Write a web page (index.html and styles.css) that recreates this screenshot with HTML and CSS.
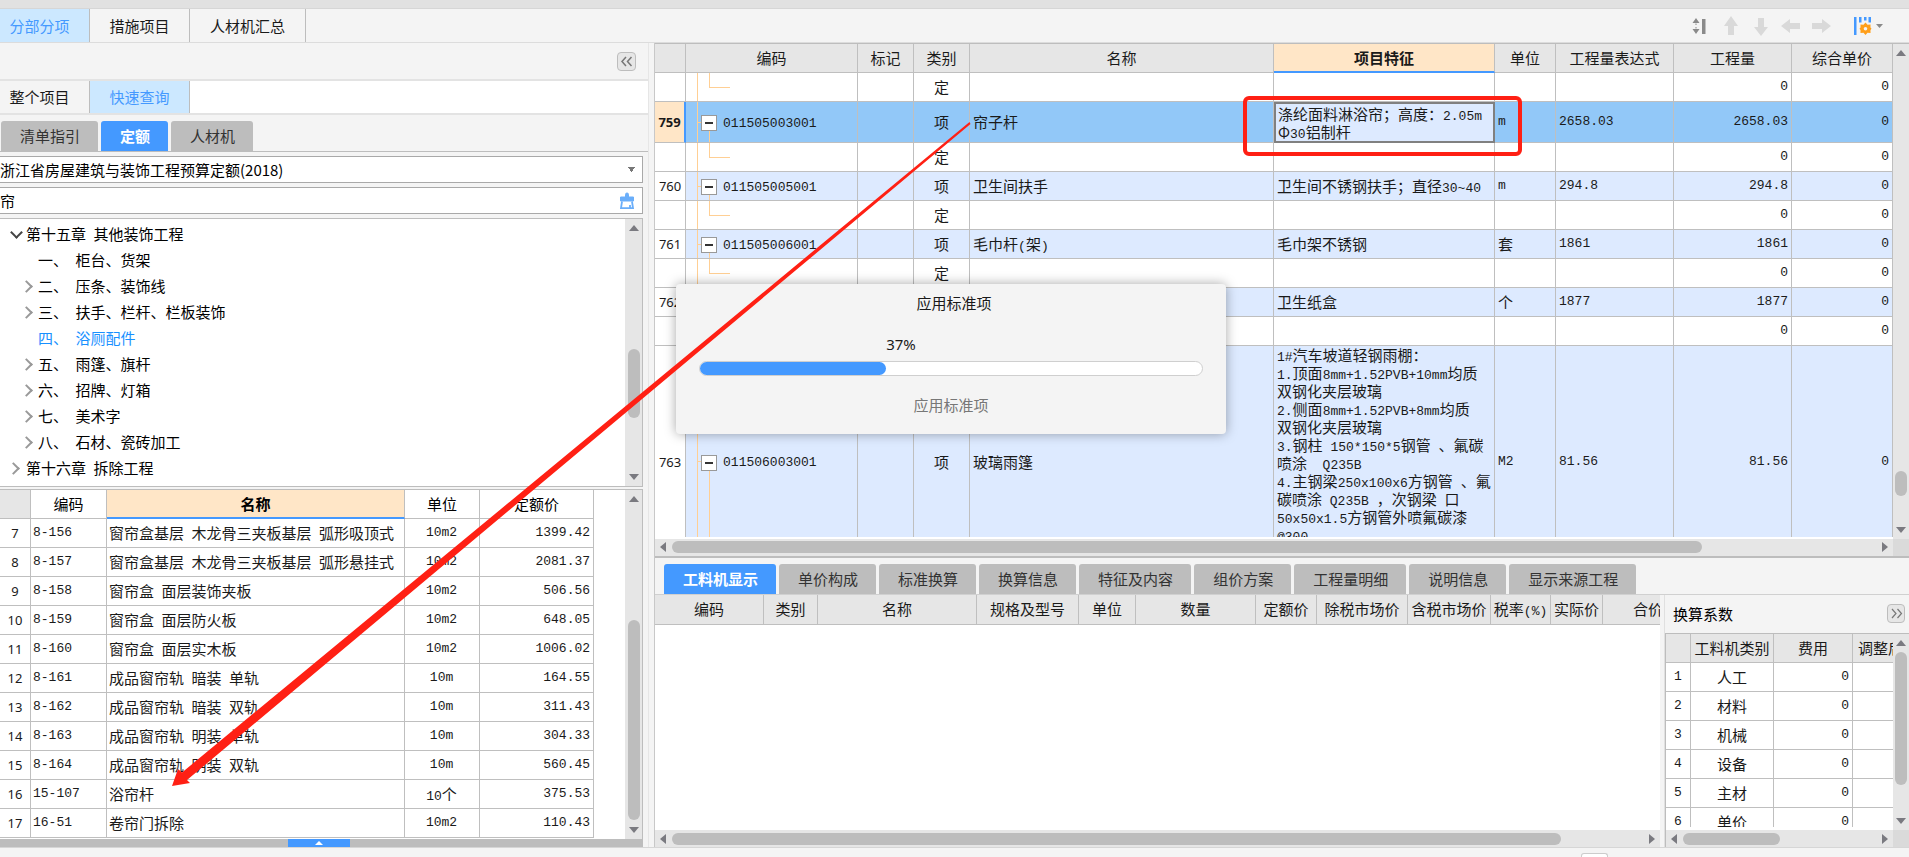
FILE: index.html
```html
<!DOCTYPE html>
<html lang="zh-CN">
<head>
<meta charset="utf-8">
<title>分部分项</title>
<link rel="stylesheet" href="styles.css">
</head>
<body>
<div class="strip"></div>
<header class="topbar">
  <nav class="tabs">
    <button class="tab active">分部分项</button>
    <button class="tab">措施项目</button>
    <button class="tab tab-wide">人材机汇总</button>
  </nav>
  <div class="tools">
    <button class="tool sort" aria-label="排序"><svg width="14" height="18" viewBox="0 0 14 18"><path d="M4 1l3.500 5h-7zM4 17l3.500-5h-7z" fill="#8a8a8a"/><path d="M4 6.500v1.500M4 10v1.500" stroke="#8a8a8a"/><path d="M10 2h3.500v15H10z" fill="#8a8a8a"/></svg></button>
    <button class="tool" aria-label="上移"><svg width="20" height="20" viewBox="0 0 20 20"><path d="M10 0l7 10h-4v9H7v-9H3z" fill="#d9d9d9"/></svg></button>
    <button class="tool" aria-label="下移"><svg width="20" height="20" viewBox="0 0 20 20"><path d="M10 20l7-9h-4V2H7v9H3z" fill="#d9d9d9"/></svg></button>
    <button class="tool" aria-label="左移"><svg width="20" height="20" viewBox="0 0 20 20"><path d="M0 10l9-7v4h10v6H9v4z" fill="#d9d9d9"/></svg></button>
    <button class="tool" aria-label="右移"><svg width="20" height="20" viewBox="0 0 20 20"><path d="M20 10l-9-7v4H1v6h10v4z" fill="#d9d9d9"/></svg></button>
    <button class="tool columns" aria-label="列设置"><svg width="32" height="20" viewBox="0 0 32 20"><path d="M1 1h2.500v18H1z" fill="#4499ff"/><path d="M6 1h2.500v5.500H6zM11 1h2.500v3.500H11zM15.500 1H18v5.500h-2.500z" fill="#4499ff"/><path d="M12.500 6.500l2 2.300 3-.3v3l1 1.300-1 1.300v3l-3-.3-2 2.300-2-2.300-3 .3v-3l-1-1.300 1-1.300v-3l3 .3z" fill="#ff9f1a"/><circle cx="12.500" cy="12.800" r="1.800" fill="#f4f4f4"/><path d="M23 8h7l-3.500 4z" fill="#8a8a8a"/></svg></button>
  </div>
</header>
<main class="work">
  <section class="left">
    <div class="fold-row"><button class="fold" aria-label="收起"><svg width="13" height="11" viewBox="0 0 13 11"><path d="M6 1L2 5.500 6 10M11.500 1l-4 4.500 4 4.500" fill="none" stroke="#777" stroke-width="1.500"/></svg></button></div>
    <nav class="tabs subtabs">
      <button class="tab">整个项目</button>
      <button class="tab active">快速查询</button>
    </nav>
    <nav class="chips left-chips">
      <button class="chip">清单指引</button>
      <button class="chip on">定额</button>
      <button class="chip">人材机</button>
    </nav>
    <div class="query">
      <select class="field pick" aria-label="定额库"><option>浙江省房屋建筑与装饰工程预算定额(2018)</option></select>
      <div class="field search">
        <input type="text" value="帘" aria-label="关键字">
        <button class="clear" aria-label="清空"><svg width="16" height="18" viewBox="0 0 16 18"><path d="M6.500 5V2.500a1.500 1.500 0 013 0V5h5v4h-13V5z" fill="#6aaefa" stroke="#6aaefa"/><path d="M3 9.500L2 16.200h12L13 9.500M11 16v-3" fill="none" stroke="#6aaefa" stroke-width="1.800"/></svg></button>
      </div>
      <div class="tree-box">
        <ul class="tree">
          <li class="open">第十五章&ensp;其他装饰工程</li>
          <li class="sub">一、&ensp;柜台、货架</li>
          <li class="sub more">二、&ensp;压条、装饰线</li>
          <li class="sub more">三、&ensp;扶手、栏杆、栏板装饰</li>
          <li class="sub picked">四、&ensp;浴厕配件</li>
          <li class="sub more">五、&ensp;雨篷、旗杆</li>
          <li class="sub more">六、&ensp;招牌、灯箱</li>
          <li class="sub more">七、&ensp;美术字</li>
          <li class="sub more">八、&ensp;石材、瓷砖加工</li>
          <li class="more">第十六章&ensp;拆除工程</li>
        </ul>
        <div class="vbar"><b class="up"></b><div class="track t-tree"><i></i></div><b class="down"></b></div>
      </div>
      <div class="quota-box">
        <div class="quota-scroll">
        <table class="grid quota">
          <colgroup><col class="q1"><col class="q2"><col><col class="q4"><col class="q5"></colgroup>
          <thead><tr><th class="gray"></th><th>编码</th><th class="sel">名称</th><th>单位</th><th>定额价</th></tr></thead>
          <tbody>
          <tr><td class="no">7</td><td class="n">8-156</td><td>窗帘盒基层&ensp;木龙骨三夹板基层&ensp;弧形吸顶式</td><td class="n c">10m2</td><td class="n r">1399.42</td></tr>
          <tr><td class="no">8</td><td class="n">8-157</td><td>窗帘盒基层&ensp;木龙骨三夹板基层&ensp;弧形悬挂式</td><td class="n c">10m2</td><td class="n r">2081.37</td></tr>
          <tr><td class="no">9</td><td class="n">8-158</td><td>窗帘盒&ensp;面层装饰夹板</td><td class="n c">10m2</td><td class="n r">506.56</td></tr>
          <tr><td class="no">10</td><td class="n">8-159</td><td>窗帘盒&ensp;面层防火板</td><td class="n c">10m2</td><td class="n r">648.05</td></tr>
          <tr><td class="no">11</td><td class="n">8-160</td><td>窗帘盒&ensp;面层实木板</td><td class="n c">10m2</td><td class="n r">1006.02</td></tr>
          <tr><td class="no">12</td><td class="n">8-161</td><td>成品窗帘轨&ensp;暗装&ensp;单轨</td><td class="n c">10m</td><td class="n r">164.55</td></tr>
          <tr><td class="no">13</td><td class="n">8-162</td><td>成品窗帘轨&ensp;暗装&ensp;双轨</td><td class="n c">10m</td><td class="n r">311.43</td></tr>
          <tr><td class="no">14</td><td class="n">8-163</td><td>成品窗帘轨&ensp;明装&ensp;单轨</td><td class="n c">10m</td><td class="n r">304.33</td></tr>
          <tr><td class="no">15</td><td class="n">8-164</td><td>成品窗帘轨&ensp;明装&ensp;双轨</td><td class="n c">10m</td><td class="n r">560.45</td></tr>
          <tr><td class="no">16</td><td class="n">15-107</td><td>浴帘杆</td><td class="c"><span class="n">10</span>个</td><td class="n r">375.53</td></tr>
          <tr><td class="no">17</td><td class="n">16-51</td><td>卷帘门拆除</td><td class="n c">10m2</td><td class="n r">110.43</td></tr>
          </tbody>
        </table>
        </div>
        <div class="vbar"><b class="up"></b><div class="track t-quota"><i></i></div><b class="down"></b></div>
      </div>
      <div class="drawer"><button class="drawer-tab" aria-label="展开"><b class="up"></b></button></div>
    </div>
  </section>
  <section class="right">
    <div class="pane bill">
      <div class="bill-scroll">
      <table class="grid items">
        <colgroup><col class="w32"><col class="w172"><col class="w56"><col class="w56"><col><col class="w221"><col class="w61"><col class="w118"><col class="w118"><col class="w101"></colgroup>
        <thead><tr><th></th><th>编码</th><th>标记</th><th>类别</th><th>名称</th><th class="sel">项目特征</th><th>单位</th><th>工程量表达式</th><th>工程量</th><th>综合单价</th></tr></thead>
        <tbody>
        <tr><td class="no"></td><td class="leaf"></td><td></td><td class="c">定</td><td></td><td></td><td></td><td></td><td class="n r">0</td><td class="n r">0</td></tr>
        <tr class="item current"><td class="no">759</td><td class="node"><button class="fold-node" aria-label="折叠"></button><span class="n">011505003001</span></td><td></td><td class="c">项</td><td>帘子杆</td><td class="feature focus">涤纶面料淋浴帘；高度：<span class="n">2.05m</span><br>Φ<span class="n">30</span>铝制杆</td><td class="n">m</td><td class="n">2658.03</td><td class="n r">2658.03</td><td class="n r">0</td></tr>
        <tr><td class="no"></td><td class="leaf"></td><td></td><td class="c">定</td><td></td><td></td><td></td><td></td><td class="n r">0</td><td class="n r">0</td></tr>
        <tr class="item"><td class="no">760</td><td class="node"><button class="fold-node" aria-label="折叠"></button><span class="n">011505005001</span></td><td></td><td class="c">项</td><td>卫生间扶手</td><td>卫生间不锈钢扶手；直径<span class="n">30~40</span></td><td class="n">m</td><td class="n">294.8</td><td class="n r">294.8</td><td class="n r">0</td></tr>
        <tr><td class="no"></td><td class="leaf"></td><td></td><td class="c">定</td><td></td><td></td><td></td><td></td><td class="n r">0</td><td class="n r">0</td></tr>
        <tr class="item"><td class="no">761</td><td class="node"><button class="fold-node" aria-label="折叠"></button><span class="n">011505006001</span></td><td></td><td class="c">项</td><td>毛巾杆<span class="n">(</span>架<span class="n">)</span></td><td>毛巾架不锈钢</td><td>套</td><td class="n">1861</td><td class="n r">1861</td><td class="n r">0</td></tr>
        <tr><td class="no"></td><td class="leaf"></td><td></td><td class="c">定</td><td></td><td></td><td></td><td></td><td class="n r">0</td><td class="n r">0</td></tr>
        <tr class="item"><td class="no">762</td><td class="node"></td><td></td><td class="c"></td><td></td><td>卫生纸盒</td><td>个</td><td class="n">1877</td><td class="n r">1877</td><td class="n r">0</td></tr>
        <tr><td class="no"></td><td class="leaf"></td><td></td><td class="c"></td><td></td><td></td><td></td><td></td><td class="n r">0</td><td class="n r">0</td></tr>
        <tr class="item tall"><td class="no">763</td><td class="node"><button class="fold-node" aria-label="折叠"></button><span class="n">011506003001</span></td><td></td><td class="c">项</td><td>玻璃雨篷</td><td class="feature"><span class="n">1#</span>汽车坡道轻钢雨棚：<br><span class="n">1.</span>顶面<span class="n">8mm+1.52PVB+10mm</span>均质<br>双钢化夹层玻璃<br><span class="n">2.</span>侧面<span class="n">8mm+1.52PVB+8mm</span>均质<br>双钢化夹层玻璃<br><span class="n">3.</span>钢柱<span class="n"> 150*150*5</span>钢管<span class="n"> </span>、氟碳<br>喷涂<span class="n">&nbsp; Q235B</span><br><span class="n">4.</span>主钢梁<span class="n">250x100x6</span>方钢管<span class="n"> </span>、氟<br>碳喷涂<span class="n"> Q235B </span>，次钢梁<span class="n"> </span>口<br><span class="n">50x50x1.5</span>方钢管外喷氟碳漆<br><span class="n">@300</span></td><td class="n">M2</td><td class="n">81.56</td><td class="n r">81.56</td><td class="n r">0</td></tr>
        </tbody>
      </table>
      </div>
      <div class="vbar"><b class="up"></b><div class="track t-bill"><i></i></div><b class="down"></b></div>
      <div class="hbar"><b class="prev"></b><div class="track t-bill-h"><i></i></div><b class="next"></b></div>
      <div class="corner"></div>
    </div>
    <nav class="chips lower-chips">
      <button class="chip on">工料机显示</button>
      <button class="chip">单价构成</button>
      <button class="chip">标准换算</button>
      <button class="chip">换算信息</button>
      <button class="chip">特征及内容</button>
      <button class="chip">组价方案</button>
      <button class="chip">工程量明细</button>
      <button class="chip">说明信息</button>
      <button class="chip">显示来源工程</button>
    </nav>
    <div class="lower">
      <div class="detail">
        <div class="detail-scroll">
          <table class="grid parts">
            <colgroup><col class="w109"><col class="w54"><col class="w159"><col class="w102"><col class="w57"><col class="w120"><col class="w61"><col class="w91"><col class="w83"><col class="w60"><col class="w52"><col class="w91"></colgroup>
            <thead><tr><th>编码</th><th>类别</th><th>名称</th><th>规格及型号</th><th>单位</th><th>数量</th><th>定额价</th><th>除税市场价</th><th>含税市场价</th><th>税率<span class="n">(%)</span></th><th>实际价</th><th>合价</th></tr></thead>
          </table>
        </div>
        <div class="hbar"><b class="prev"></b><div class="track t-parts"><i></i></div><b class="next"></b></div>
      </div>
      <aside class="factor">
        <div class="factor-head"><span>换算系数</span><button class="fold small" aria-label="展开"><svg width="13" height="11" viewBox="0 0 13 11"><path d="M2 1l4 4.500L2 10M7.500 1l4 4.500-4 4.500" fill="none" stroke="#777" stroke-width="1.200"/></svg></button></div>
        <div class="pane factor-pane">
          <div class="factor-scroll">
          <table class="grid factors">
            <colgroup><col class="w25"><col class="w83"><col class="w79"><col class="w91"></colgroup>
            <thead><tr><th></th><th>工料机类别</th><th>费用</th><th class="clip">调整后</th></tr></thead>
            <tbody>
            <tr><td class="n c">1</td><td class="c">人工</td><td class="n r">0</td><td></td></tr>
            <tr><td class="n c">2</td><td class="c">材料</td><td class="n r">0</td><td></td></tr>
            <tr><td class="n c">3</td><td class="c">机械</td><td class="n r">0</td><td></td></tr>
            <tr><td class="n c">4</td><td class="c">设备</td><td class="n r">0</td><td></td></tr>
            <tr><td class="n c">5</td><td class="c">主材</td><td class="n r">0</td><td></td></tr>
            <tr><td class="n c">6</td><td class="c">单价</td><td class="n r">0</td><td></td></tr>
            </tbody>
          </table>
          </div>
          <div class="vbar"><b class="up"></b><div class="track t-factor"><i></i></div><b class="down"></b></div>
          <div class="hbar"><b class="prev"></b><div class="track t-factor-h"><i></i></div><b class="next"></b></div>
          <div class="corner"></div>
        </div>
      </aside>
    </div>
  </section>
</main>
<footer class="status"><span class="grip"></span></footer>

<div class="dialog" role="dialog" aria-label="应用标准项">
  <h2>应用标准项</h2>
  <div class="percent">37%</div>
  <div class="bar" role="progressbar" aria-valuenow="37"><div class="fill" style="width:37%"></div></div>
  <p>应用标准项</p>
</div>
<svg class="marks" width="1909" height="857" viewBox="0 0 1909 857" aria-hidden="true">
  <rect x="1245" y="98" width="275" height="56" rx="4" fill="none" stroke="#ff2014" stroke-width="4"/>
  <path d="M172 786L178 769 182 772.500 969.500 122 970.500 124 187 780 190 783z" fill="#ff2014"/>
</svg>
</body>
</html>
```

FILE: styles.css
```css
* { box-sizing: border-box; }
body {
  margin: 0; height: 100vh; display: flex; flex-direction: column; overflow: hidden; position: relative;
  background: #f4f4f4; color: #1a1a1a;
  font: 15px/20px "Noto Sans CJK SC", sans-serif;
}
button, input, select { font: inherit; color: inherit; margin: 0; padding: 0; border: 0; background: none; border-radius: 0; }
.strip { height: 9px; background: #e1e1e1; border-bottom: 1px solid #d6d6d6; flex: none; }
.topbar { flex: none; height: 34px; display: flex; justify-content: space-between; border-bottom: 1px solid #dcdcdc; }
.tabs { display: flex; }
.tab { width: 100px; border-right: 1px solid #bdbdbd; background: #f4f4f4; }
.tab:first-child { width: 90px; padding-right: 10px; }
.tab-wide { width: 116px; }
.tab.active { background: #cce8ff; color: #4499ff; }
.tools { display: flex; align-items: center; gap: 10px; padding-right: 24px; }
.tool { display: flex; }
.sort { margin-right: 5px; }
.columns { margin-left: 12px; }

.work { flex: 1; min-height: 0; display: flex; gap: 5px; border-bottom: 1px solid #d6d6d6; }
.left { flex: 0 0 34%; display: flex; flex-direction: column; min-width: 0; border-right: 1px solid #e6e6e6; }
.fold-row { height: 38px; flex: none; display: flex; justify-content: flex-end; align-items: center; padding-right: 12px; border-bottom: 2px solid #e3e3e3; }
.fold { width: 19px; height: 19px; display: flex; align-items: center; justify-content: center; border: 1px solid #bdbdbd; border-radius: 4px; background: #e6e6e6; }
.subtabs { height: 34px; flex: none; background: #fff; border-bottom: 2px solid #e3e3e3; }
.chips { display: flex; align-items: flex-end; flex: none; gap: 3px; }
.chip { height: 30px; padding: 0 18px 0 19px; background: #bdbdbd; border-radius: 3px 3px 0 0; color: #333; white-space: nowrap; }
.chip.on { background: #4499ff; color: #fff; font-weight: 700; }
.left-chips { height: 37px; padding-left: 1px; border-bottom: 1px solid #bdbdbd; }
.query { flex: 1; min-height: 0; display: flex; flex-direction: column; padding: 4px 5px 0 0; background: #f4f4f4; }
.field { height: 27px; flex: none; border: 1px solid #a9a9a9; border-left: 0; background: #fff; margin-bottom: 4px; color: #000; }
.pick {
  appearance: none; width: 100%;
  background: conic-gradient(from -36deg at 50% 100%, #777 0 72deg, transparent 0) no-repeat right 7px center / 7px 5px #fff;
}
.search { display: flex; align-items: center; padding-right: 7px; }
.search input { flex: 1; outline: 0; }
.clear { display: flex; }
.tree-box { flex: 0 0 269px; display: flex; border: 1px solid #bdbdbd; border-left: 0; background: #fff; margin-bottom: 2px; }
.tree { flex: 1; margin: 0; padding: 2px 0 0; list-style: none; color: #000; }
.tree li { height: 26px; line-height: 26px; padding-left: 26px; position: relative; white-space: nowrap; }
.tree .sub { padding-left: 38px; }
.tree .picked { color: #1890ff; }
.tree .more::before, .tree .open::before {
  content: ""; position: absolute; left: 9px; top: 9px; width: 7px; height: 7px;
  border: solid #999; border-width: 2px 2px 0 0; transform: rotate(45deg);
}
.tree .sub.more::before { left: 22px; }
.tree .open::before { top: 7px; left: 12px; border-color: #444; transform: rotate(135deg); }

.vbar { width: 17px; background: #e6e6e6; display: flex; flex-direction: column; align-items: center; padding: 6px 0; }
.hbar { height: 17px; background: #e6e6e6; display: flex; align-items: center; padding: 0 5px; }
.vbar .track { flex: 1; width: 12px; margin: 6px 0; display: grid; min-height: 0; }
.hbar .track { flex: 1; height: 12px; margin: 0 6px; display: grid; }
.track i { background: #bdbdbd; border-radius: 6px; }
.vbar .track i { grid-row: 2; }
.t-tree { grid-template-rows: 113fr 70fr 51fr; }
.t-quota { grid-template-rows: 113fr 202fr 1fr; }
.t-bill { grid-template-rows: 411fr 25fr 25fr; }
.t-factor { grid-template-rows: 0 135fr 28fr; }
.t-bill-h { grid-template-columns: 1032fr 174fr; }
.t-parts { grid-template-columns: 890fr 82fr; }
.t-factor-h { grid-template-columns: 1fr 1fr; }
b.up, b.down { border: solid transparent; border-width: 0 5px 6px; border-bottom-color: #7a7a80; }
b.down { border-width: 6px 5px 0; border-top-color: #7a7a80; }
b.prev, b.next { border: solid transparent; border-width: 5px 6px 5px 0; border-right-color: #7a7a80; }
b.next { border-width: 5px 0 5px 6px; border-left-color: #7a7a80; }
.corner { background: #dadada; }

.grid { border-collapse: separate; border-spacing: 0; table-layout: fixed; width: 100%; background: #fff; }
.grid th, .grid td { height: 29px; padding: 0 3px; border: solid #bfbfbf; border-width: 0 1px 1px 0; white-space: nowrap; overflow: hidden; text-align: left; line-height: 18px; }
.grid th { font-weight: 400; text-align: center; background: #e6e6e6; }
.grid th.sel { background: #ffe6c7; font-weight: 700; border-bottom: 2px solid #4499ff; }
.grid .c { text-align: center; }
.grid .r { text-align: right; }
.n { font-family: "Liberation Mono", "Noto Sans CJK SC", monospace; font-size: 13px; white-space: pre; }
span.n { line-height: 1; }
.grid .no { font: 13px/18px "Noto Sans", sans-serif; text-align: center; padding: 0; }

.quota-box { flex: 1; min-height: 0; display: flex; background: #fff; border: 1px solid #bdbdbd; border-left: 0; border-bottom: 0; }
.quota-scroll { flex: 1; overflow: hidden; padding-right: 31px; }
.quota th { background: #fff; color: #000; }
.quota th.gray { background: #e6e6e6; }
.quota td { padding-left: 2px; }
.q1 { width: 31px; } .q2 { width: 76px; } .q4 { width: 75px; } .q5 { width: 114px; }
.drawer { flex: none; height: 8px; background: #bdbdbd; display: flex; justify-content: center; padding-right: 6px; }
.drawer-tab { width: 62px; background: #4499ff; display: flex; align-items: center; justify-content: center; }
.drawer-tab .up { border-width: 0 4px 4px; border-bottom-color: #fff; }

.right { flex: 1; min-width: 0; display: flex; flex-direction: column; border-left: 1px solid #c8c8c8; }
.pane { display: grid; grid-template: minmax(0, 1fr) 17px / minmax(0, 1fr) 16px; min-height: 0; }
.pane .vbar { width: 16px; }
.bill { flex: 514 1 0; border-top: 1px solid #bdbdbd; border-bottom: 2px solid #bdbdbd; }
.bill-scroll { overflow: hidden; border-bottom: 2px solid #fff; }
.w25 { width: 25px; } .w32 { width: 31px; } .w52 { width: 52px; } .w54 { width: 54px; } .w56 { width: 56px; }
.w57 { width: 57px; } .w60 { width: 60px; } .w61 { width: 61px; } .w79 { width: 79px; } .w83 { width: 83px; }
.w91 { width: 91px; } .w101 { width: 101px; } .w102 { width: 102px; } .w109 { width: 109px; } .w118 { width: 118px; }
.w120 { width: 120px; } .w159 { width: 159px; } .w172 { width: 172px; } .w221 { width: 221px; }
.item td { background-color: #ddeaff; }
.item td.no { background-color: #fff; }
.current td { height: 41px; background-color: #92c8f8; }
.item.current td.no { background-color: #ffe6c7; font-weight: 700; border-right: 2px solid #4499ff; }
.item td.feature.focus { background-color: #ddeaff; border: 2px solid #808080; padding: 0 2px; }
.tall td { height: 232px; }
.tall .feature { vertical-align: top; }
.leaf {
  background: linear-gradient(#ffcf94, #ffcf94) 11px 0 / 1px 100% no-repeat,
    linear-gradient(#ffcf94, #ffcf94) 23px 0 / 1px 50% no-repeat,
    linear-gradient(#ffcf94, #ffcf94) 23px 50% / 21px 1px no-repeat;
}
.grid .node {
  padding-left: 15px;
  background-image: linear-gradient(#ffcf94, #ffcf94), linear-gradient(#ffcf94, #ffcf94), linear-gradient(#ffcf94, #ffcf94);
  background-position: 11px 0, 23px 100%, 11px 50%;
  background-size: 1px 100%, 1px 50%, 5px 1px;
  background-repeat: no-repeat;
}
.fold-node { width: 16px; height: 16px; margin-right: 6px; vertical-align: middle; border: 1px solid #999; background: #fff linear-gradient(#333, #333) center / 8px 2px no-repeat; }
.node .n { vertical-align: middle; }

.lower-chips { height: 37px; padding-left: 9px; border-bottom: 1px solid #d0d0d0; }
.lower { flex: 253 1 0; min-height: 0; display: flex; gap: 4px; }
.detail { flex: 1; min-width: 0; display: flex; flex-direction: column; background: #fff; }
.detail-scroll { flex: 1; overflow: hidden; }
.parts { width: 1039px; }
.parts th { height: 30px; padding: 0; }
.factor { width: 245px; display: flex; flex-direction: column; border-left: 1px solid #e0e0e0; }
.factor-head { height: 38px; flex: none; display: flex; align-items: center; justify-content: space-between; padding: 0 4px 0 8px; color: #000; }
.fold.small { width: 18px; }
.factor-pane { flex: 1; border-top: 1px solid #bdbdbd; border-left: 1px solid #bdbdbd; }
.factor-scroll { overflow: hidden; border-bottom: 3px solid #fff; }
.factors { width: 278px; }
.grid th.clip { text-align: left; padding-left: 5px; }

.status { height: 9px; flex: none; display: flex; justify-content: flex-end; align-items: flex-end; padding-right: 301px; }
.grip { width: 27px; height: 4px; background: #fff; border: 1px solid #ccc; border-bottom: 0; border-radius: 3px 3px 0 0; }

.dialog { position: absolute; left: 676px; top: 284px; width: 550px; height: 150px; background: #f4f4f4; border-radius: 4px; box-shadow: 0 0 12px rgba(0, 0, 0, .35); padding: 9px 23px 0; text-align: center; }
.dialog h2 { margin: 0; font-size: 15px; font-weight: 400; line-height: 20px; padding-left: 6px; }
.percent { margin-top: 22px; padding-right: 100px; font: 15px/18px "Noto Sans", sans-serif; }
.bar { margin-top: 8px; height: 15px; border: 1px solid #cfcfcf; border-radius: 8px; background: #fff; }
.fill { height: 100%; border-radius: 7px; background: #4499ff; }
.dialog p { margin: 19px 0 0; color: #777; }
.marks { position: absolute; left: 0; top: 0; pointer-events: none; }
```
